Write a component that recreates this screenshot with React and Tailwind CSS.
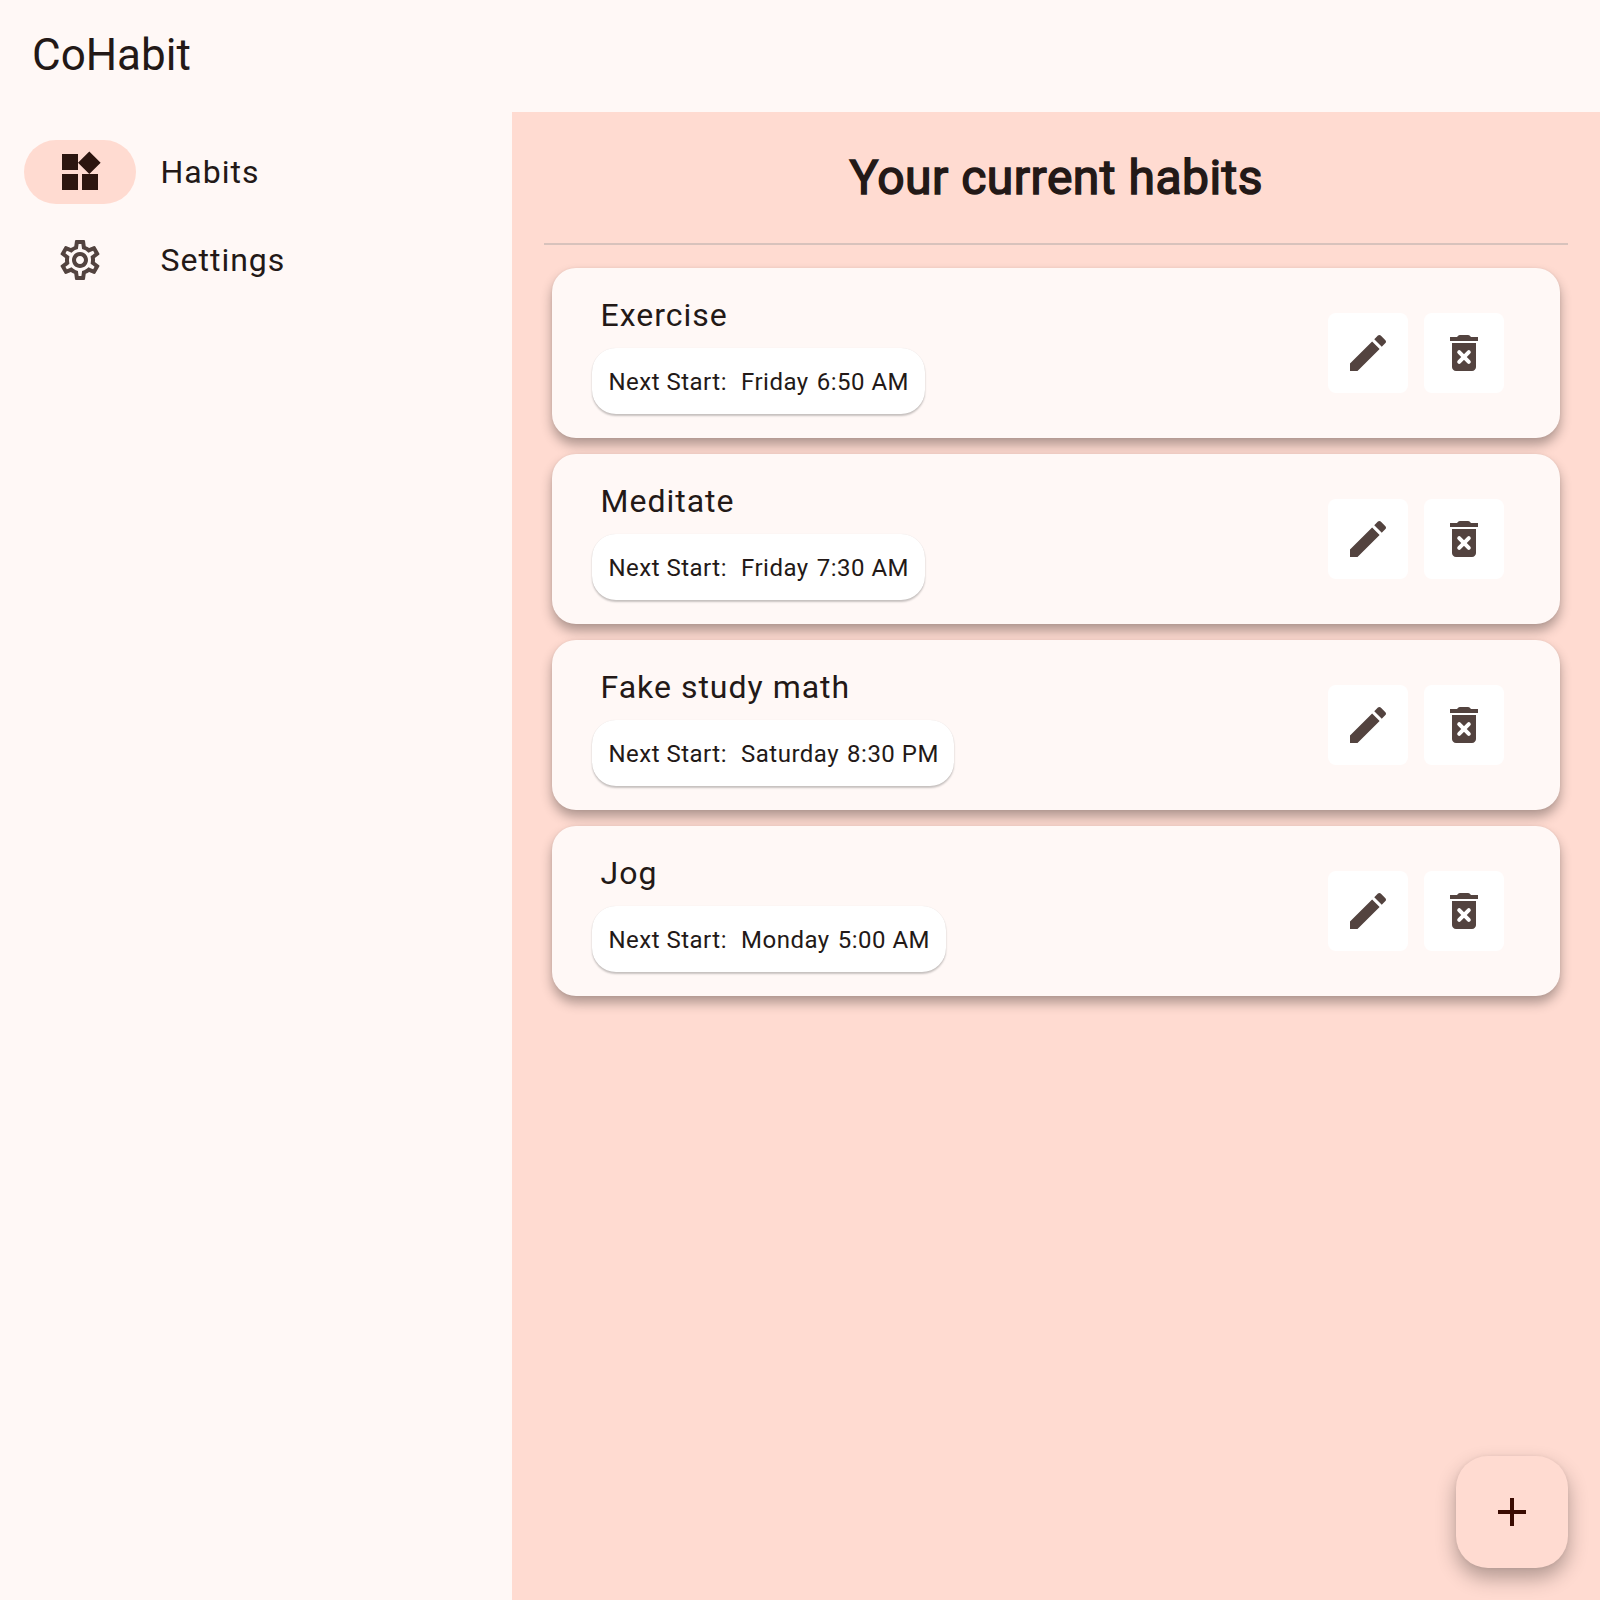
const habits = [
  { name: "Exercise", day: "Friday", time: "6:50 AM" },
  { name: "Meditate", day: "Friday", time: "7:30 AM" },
  { name: "Fake study math", day: "Saturday", time: "8:30 PM" },
  { name: "Jog", day: "Monday", time: "5:00 AM" },
];

const paths = {
  widgets:
    "M13 13v8h8v-8h-8zM3 21h8v-8H3v8zM3 3v8h8V3H3zm13.66-1.31L11 7.34 16.66 13l5.66-5.66-5.66-5.65z",
  settings:
    "M19.43 12.98c.04-.32.07-.64.07-.98 0-.34-.03-.66-.07-.98l2.11-1.65c.19-.15.24-.42.12-.64l-2-3.46c-.09-.16-.26-.25-.44-.25-.06 0-.12.01-.17.03l-2.49 1c-.52-.4-1.08-.73-1.69-.98l-.38-2.65C14.46 2.18 14.25 2 14 2h-4c-.25 0-.46.18-.49.42l-.38 2.65c-.61.25-1.17.59-1.69.98l-2.49-1c-.06-.02-.12-.03-.18-.03-.17 0-.34.09-.43.25l-2 3.46c-.13.22-.07.49.12.64l2.11 1.65c-.04.32-.07.65-.07.98 0 .33.03.66.07.98l-2.11 1.65c-.19.15-.24.42-.12.64l2 3.46c.09.16.26.25.44.25.06 0 .12-.01.17-.03l2.49-1c.52.4 1.08.73 1.69.98l.38 2.65c.03.24.24.42.49.42h4c.25 0 .46-.18.49-.42l.38-2.65c.61-.25 1.17-.59 1.69-.98l2.49 1c.06.02.12.03.18.03.17 0 .34-.09.43-.25l2-3.46c.12-.22.07-.49-.12-.64l-2.11-1.65zm-1.98-1.71c.04.31.05.52.05.73 0 .21-.02.43-.05.73l-.14 1.13.89.7 1.08.84-.7 1.21-1.27-.51-1.04-.42-.9.68c-.43.32-.84.56-1.25.73l-1.06.43-.16 1.13-.2 1.35h-1.4l-.19-1.35-.16-1.13-1.06-.43c-.43-.18-.83-.41-1.23-.71l-.91-.7-1.06.43-1.27.51-.7-1.21 1.08-.84.89-.7-.14-1.13c-.03-.31-.05-.54-.05-.74s.02-.43.05-.73l.14-1.13-.89-.7-1.08-.84.7-1.21 1.27.51 1.04.42.9-.68c.43-.32.84-.56 1.25-.73l1.06-.43.16-1.13.2-1.35h1.39l.19 1.35.16 1.13 1.06.43c.43.18.83.41 1.23.71l.91.7 1.06-.43 1.27-.51.7 1.21-1.07.85-.89.7.14 1.13zM12 8c-2.21 0-4 1.79-4 4s1.79 4 4 4 4-1.79 4-4-1.79-4-4-4zm0 6c-1.1 0-2-.9-2-2s.9-2 2-2 2 .9 2 2-.9 2-2 2z",
  edit: "M3 17.25V21h3.75L17.81 9.94l-3.75-3.75L3 17.25zM20.71 7.04c.39-.39.39-1.02 0-1.41l-2.34-2.34c-.39-.39-1.02-.39-1.41 0l-1.83 1.83 3.75 3.75 1.83-1.83z",
  add: "M19 13h-6v6h-2v-6H5v-2h6V5h2v6h6v2z",
};

function Icon({ path, className }) {
  return (
    <svg viewBox="0 0 24 24" className={className} fill="currentColor">
      <path d={path} />
    </svg>
  );
}

function TrashIcon() {
  return (
    <svg viewBox="0 0 24 24" className="size-12" fill="currentColor">
      <path d="M6 19c0 1.1.9 2 2 2h8c1.1 0 2-.9 2-2V7H6v12z" />
      <path d="M15.5 4l-.71-.71c-.18-.18-.44-.29-.7-.29H9.91c-.26 0-.52.11-.7.29L8.5 4H5v2h14V4z" />
      <path d="M9.6 11.6l4.8 4.8M14.4 11.6l-4.8 4.8" stroke="#fff" strokeWidth="2" strokeLinecap="round" />
    </svg>
  );
}

function NavItem({ icon, label, active }) {
  return (
    <a className="flex h-16 items-center gap-[24.5px]">
      <span
        className={
          active
            ? "flex h-16 w-28 items-center justify-center rounded-full bg-[#ffdbd1] text-[#2c150f]"
            : "flex h-16 w-28 items-center justify-center rounded-full text-[#53433f]"
        }
      >
        <Icon path={icon} className="size-12" />
      </span>
      <span className="text-[32px] leading-12 tracking-[1px]">{label}</span>
    </a>
  );
}

function ActionButton({ children, label }) {
  return (
    <button aria-label={label} className="flex size-20 items-center justify-center rounded-lg bg-white text-[#53433f]">
      {children}
    </button>
  );
}

function HabitCard({ name, day, time }) {
  return (
    <li className="flex h-[170px] items-center justify-between rounded-3xl bg-[#fff8f6] pr-14 pl-10 shadow-[0_7px_12px_0_rgba(0,0,0,0.31),0_0_3px_0_rgba(0,0,0,0.06)]">
      <div className="flex flex-col items-start gap-2">
        <h2 className="-mt-px mb-px pl-[8.5px] text-[32px] leading-12 tracking-[1px]">{name}</h2>
        <p className="flex h-[66px] items-center rounded-3xl bg-white pr-[15.5px] pl-[16.4px] pt-0.5 text-2xl leading-8 tracking-[0.5px] shadow-[0_2px_2px_0_rgba(0,0,0,0.22),0_0_1px_0_rgba(0,0,0,0.1)]">
          <span>Next Start:</span>
          <span className="ml-[14px]">{day}</span>
          <span className="ml-2">{time}</span>
        </p>
      </div>
      <div className="flex gap-4">
        <ActionButton label="Edit">
          <Icon path={paths.edit} className="size-12" />
        </ActionButton>
        <ActionButton label="Delete">
          <TrashIcon />
        </ActionButton>
      </div>
    </li>
  );
}

export default function App() {
  return (
    <div className="relative flex h-[1600px] w-[1600px] flex-col overflow-hidden bg-[#fff8f6] font-['Roboto',sans-serif] text-[#231917]">
      <header className="flex h-28 items-center px-8 pb-0.5">
        <h1 className="text-[44px] leading-14">CoHabit</h1>
      </header>
      <div className="flex flex-1">
        <nav className="flex w-[512px] flex-col gap-6 px-6 pt-7">
          <NavItem icon={paths.widgets} label="Habits" active />
          <NavItem icon={paths.settings} label="Settings" />
        </nav>
        <main className="flex-1 bg-[#ffdbd1] px-8">
          <div className="flex h-[131px] items-center justify-center">
            <h2 className="pl-[0.5px] text-5xl leading-16 tracking-[0.5px] [-webkit-text-stroke:1.5px_#231917]">Your current habits</h2>
          </div>
          <hr className="border-t-2 border-[#d8c2bc]" />
          <ul className="mt-[23px] flex flex-col gap-4 px-2">
            {habits.map((h) => (
              <HabitCard key={h.name} {...h} />
            ))}
          </ul>
        </main>
      </div>
      <button
        aria-label="Add habit"
        className="absolute right-8 bottom-8 flex size-28 items-center justify-center rounded-[32px] bg-[#ffdbd1] text-[#3a0b01] shadow-[0_10px_20px_0_rgba(0,0,0,0.3),0_0_4px_0_rgba(0,0,0,0.06)]"
      >
        <Icon path={paths.add} className="size-12" />
      </button>
    </div>
  );
}
